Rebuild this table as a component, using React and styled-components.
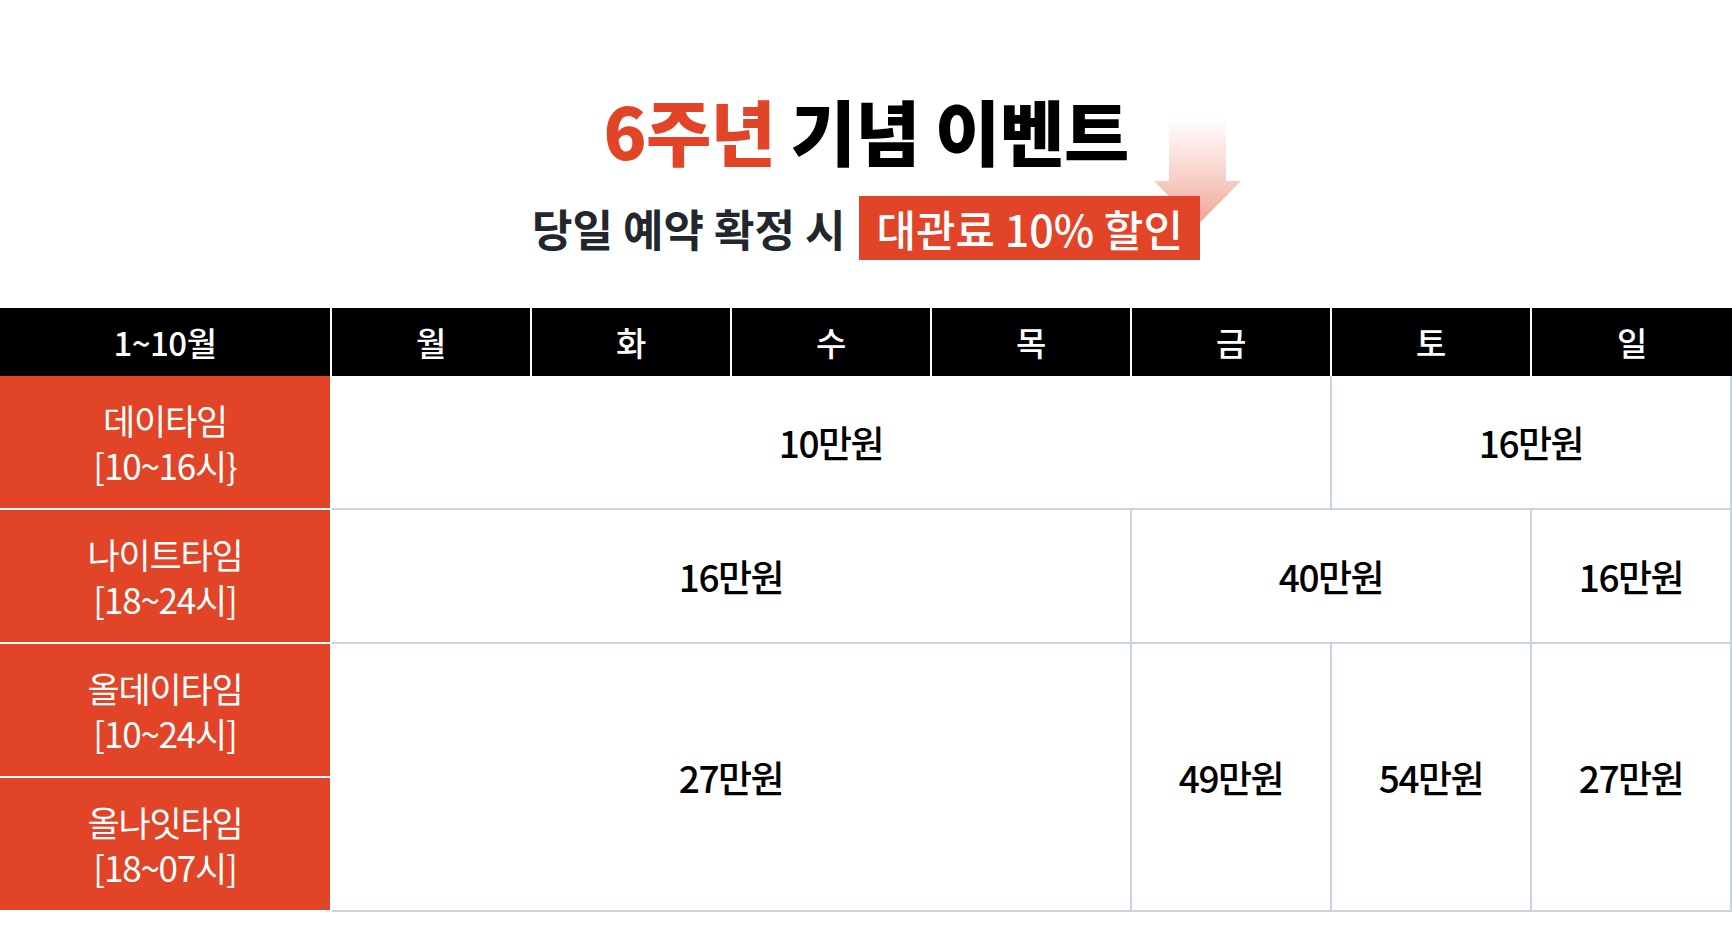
import styled, { createGlobalStyle } from "styled-components";

const GlobalStyle = createGlobalStyle`
  html, body {
    margin: 0;
    padding: 0;
    background: #fff;
  }
  body {
    font-family: "Noto Sans CJK KR", "Noto Sans", sans-serif;
  }
`;

const RED = "#e24427";
const LINE = "#c8d3de";

const Page = styled.div`
  width: 1732px;
  min-height: 938px;
  background: #fff;
`;

const Hero = styled.section`
  display: flex;
  flex-direction: column;
  align-items: center;
  padding-top: 88px;
  height: 308px;
  box-sizing: border-box;
`;

const Title = styled.h1`
  margin: 0;
  font-size: 71px;
  line-height: 82px;
  font-weight: 900;
  letter-spacing: -0.8px;
  color: #000;
`;

const Accent = styled.span`
  color: ${RED};
`;

const SubRow = styled.div`
  display: flex;
  align-items: center;
  gap: 14px;
  margin-top: 26px;
`;

const SubText = styled.p`
  margin: 0;
  font-size: 44px;
  font-weight: 700;
  color: #22262d;
`;

const BadgeWrap = styled.div`
  position: relative;
`;

const Arrow = styled.svg`
  position: absolute;
  right: -41px;
  top: -78px;
  z-index: 0;
`;

const Badge = styled.div`
  position: relative;
  z-index: 1;
  height: 64px;
  display: flex;
  align-items: center;
  padding: 0 17px 0 17px;
  background: ${RED};
  color: #fff;
  font-size: 43px;
  font-weight: 500;
`;

const Table = styled.div`
  display: grid;
  grid-template-columns: 332px repeat(7, 200px);
  grid-template-rows: 68px repeat(4, 134px);
`;

const HeadCell = styled.div`
  grid-column: ${(p) => p.$col};
  grid-row: 1;
  background: #000;
  color: #fff;
  display: flex;
  align-items: center;
  justify-content: center;
  font-size: 33px;
  font-weight: 500;
  letter-spacing: -0.5px;
  border-right: ${(p) => (p.$last ? "none" : "2px solid #fff")};
`;

const LabelCell = styled.div`
  grid-column: 1;
  grid-row: ${(p) => p.$row};
  background: ${RED};
  color: #fff;
  border-right: 2px solid #fff;
  border-bottom: 2px solid #fff;
  display: flex;
  flex-direction: column;
  align-items: center;
  justify-content: center;
  font-size: 35px;
  line-height: 45px;
  font-weight: 400;
  letter-spacing: -1.2px;
`;

const PriceCell = styled.div`
  grid-column: ${(p) => p.$col};
  grid-row: ${(p) => p.$row};
  border-right: 2px solid ${LINE};
  border-bottom: 2px solid ${LINE};
  display: flex;
  align-items: center;
  justify-content: center;
  font-size: 37px;
  font-weight: 500;
  letter-spacing: -1.5px;
  color: #000;
`;

const days = ["월", "화", "수", "목", "금", "토", "일"];

const labels = [
  ["데이타임", "[10~16시}"],
  ["나이트타임", "[18~24시]"],
  ["올데이타임", "[10~24시]"],
  ["올나잇타임", "[18~07시]"],
];

const prices = [
  { col: "2 / 7", row: "2", text: "10만원" },
  { col: "7 / 9", row: "2", text: "16만원" },
  { col: "2 / 6", row: "3", text: "16만원" },
  { col: "6 / 8", row: "3", text: "40만원" },
  { col: "8 / 9", row: "3", text: "16만원" },
  { col: "2 / 6", row: "4 / 6", text: "27만원" },
  { col: "6 / 7", row: "4 / 6", text: "49만원" },
  { col: "7 / 8", row: "4 / 6", text: "54만원" },
  { col: "8 / 9", row: "4 / 6", text: "27만원" },
];

function DownArrow() {
  return (
    <Arrow width="87" height="107" viewBox="0 0 87 107">
      <defs>
        <linearGradient id="arrowFade" x1="0" y1="0" x2="0" y2="1">
          <stop offset="0" stopColor={RED} stopOpacity="0" />
          <stop offset="0.55" stopColor={RED} stopOpacity="0.25" />
          <stop offset="1" stopColor={RED} stopOpacity="0.5" />
        </linearGradient>
      </defs>
      <path d="M15 0 H72 V63 H87 L43.5 107 L0 63 H15 Z" fill="url(#arrowFade)" />
    </Arrow>
  );
}

export default function App() {
  return (
    <Page>
      <GlobalStyle />
      <Hero>
        <Title>
          <Accent>6주년</Accent> 기념 이벤트
        </Title>
        <SubRow>
          <SubText>당일 예약 확정 시</SubText>
          <BadgeWrap>
            <DownArrow />
            <Badge>대관료 10% 할인</Badge>
          </BadgeWrap>
        </SubRow>
      </Hero>

      <Table>
        <HeadCell $col="1">1~10월</HeadCell>
        {days.map((d, i) => (
          <HeadCell key={d} $col={i + 2} $last={i === days.length - 1}>
            {d}
          </HeadCell>
        ))}

        {labels.map(([name, time], i) => (
          <LabelCell key={name} $row={i + 2}>
            <span>{name}</span>
            <span>{time}</span>
          </LabelCell>
        ))}

        {prices.map((p, i) => (
          <PriceCell key={i} $col={p.col} $row={p.row}>
            {p.text}
          </PriceCell>
        ))}
      </Table>
    </Page>
  );
}
